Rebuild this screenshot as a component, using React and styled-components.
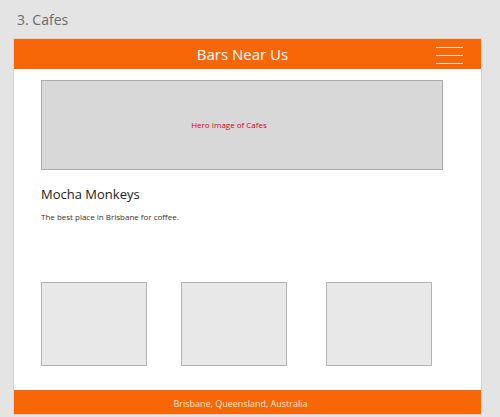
import React from "react";
import styled, { createGlobalStyle } from "styled-components";

const GlobalStyle = createGlobalStyle`
  html, body {
    margin: 0;
    padding: 0;
    background: #e4e4e4;
    font-family: "Open Sans", "Liberation Sans", sans-serif;
  }
`;

const Page = styled.div`
  width: 500px;
  height: 417px;
  overflow: hidden;
  padding: 10px 0 0 13px;
  box-sizing: border-box;
`;

const PageTitle = styled.div`
  font-family: "Open Sans", "Liberation Sans", sans-serif;
  font-size: 14px;
  line-height: 20px;
  color: #6b6b6b;
  margin: 0 0 8px 4px;
`;

const Frame = styled.div`
  width: 469px;
  height: 377px;
  box-sizing: border-box;
  border: 1px solid #cfd6dc;
  background: #ffffff;
  display: flex;
  flex-direction: column;
`;

const Header = styled.header`
  height: 30px;
  background: #f76707;
  display: flex;
  align-items: center;
  justify-content: center;
  position: relative;
  flex-shrink: 0;
`;

const HeaderTitle = styled.h1`
  margin: 0 0 0 -10px;
  font-size: 15px;
  font-weight: 400;
  color: #fff;
  line-height: 20px;
`;

const Burger = styled.div`
  position: absolute;
  right: 18px;
  top: 8px;
  width: 27px;
  display: flex;
  flex-direction: column;
  gap: 7px;

  span {
    display: block;
    height: 1px;
    background: #fde3cf;
  }
`;

const Main = styled.main`
  flex: 1;
  padding: 11px 38px 0 27px;
  display: flex;
  flex-direction: column;
`;

const Hero = styled.div`
  height: 90px;
  box-sizing: border-box;
  background: #d8d8d8;
  border: 1px solid #ababab;
  display: flex;
  align-items: center;
  justify-content: center;
  font-size: 8px;
  color: #d0021b;
  padding: 0 26px 2px 0;
`;

const CafeName = styled.h2`
  margin: 15px 0 0;
  font-size: 13px;
  font-weight: 400;
  color: #222;
  line-height: 18px;
`;

const CafeText = styled.p`
  margin: 8px 0 0;
  font-size: 8px;
  color: #333;
  line-height: 12px;
`;

const Tiles = styled.div`
  margin-top: 59px;
  display: flex;
  gap: ${(p) => p.$gap}px;
`;

const Tile = styled.div`
  width: 106px;
  height: 84px;
  box-sizing: border-box;
  background: #e8e8e8;
  border: 1px solid #b3b3b3;
  margin-left: ${(p) => p.$shift || 0}px;
`;

const Footer = styled.footer`
  height: 22px;
  background: #f76707;
  color: #fde8d8;
  font-size: 9px;
  display: flex;
  align-items: center;
  justify-content: center;
  padding: 2px 14px 0 0;
  flex-shrink: 0;
`;

export default function App() {
  return (
    <>
      <GlobalStyle />
      <Page>
        <PageTitle>3. Cafes</PageTitle>
        <Frame>
          <Header>
            <HeaderTitle>Bars Near Us</HeaderTitle>
            <Burger>
              <span />
              <span />
              <span />
            </Burger>
          </Header>
          <Main>
            <Hero>Hero Image of Cafes</Hero>
            <CafeName>Mocha Monkeys</CafeName>
            <CafeText>The best place in Brisbane for coffee.</CafeText>
            <Tiles $gap={34}>
              <Tile />
              <Tile />
              <Tile $shift={5} />
            </Tiles>
          </Main>
          <Footer>Brisbane, Queensland, Australia</Footer>
        </Frame>
      </Page>
    </>
  );
}
